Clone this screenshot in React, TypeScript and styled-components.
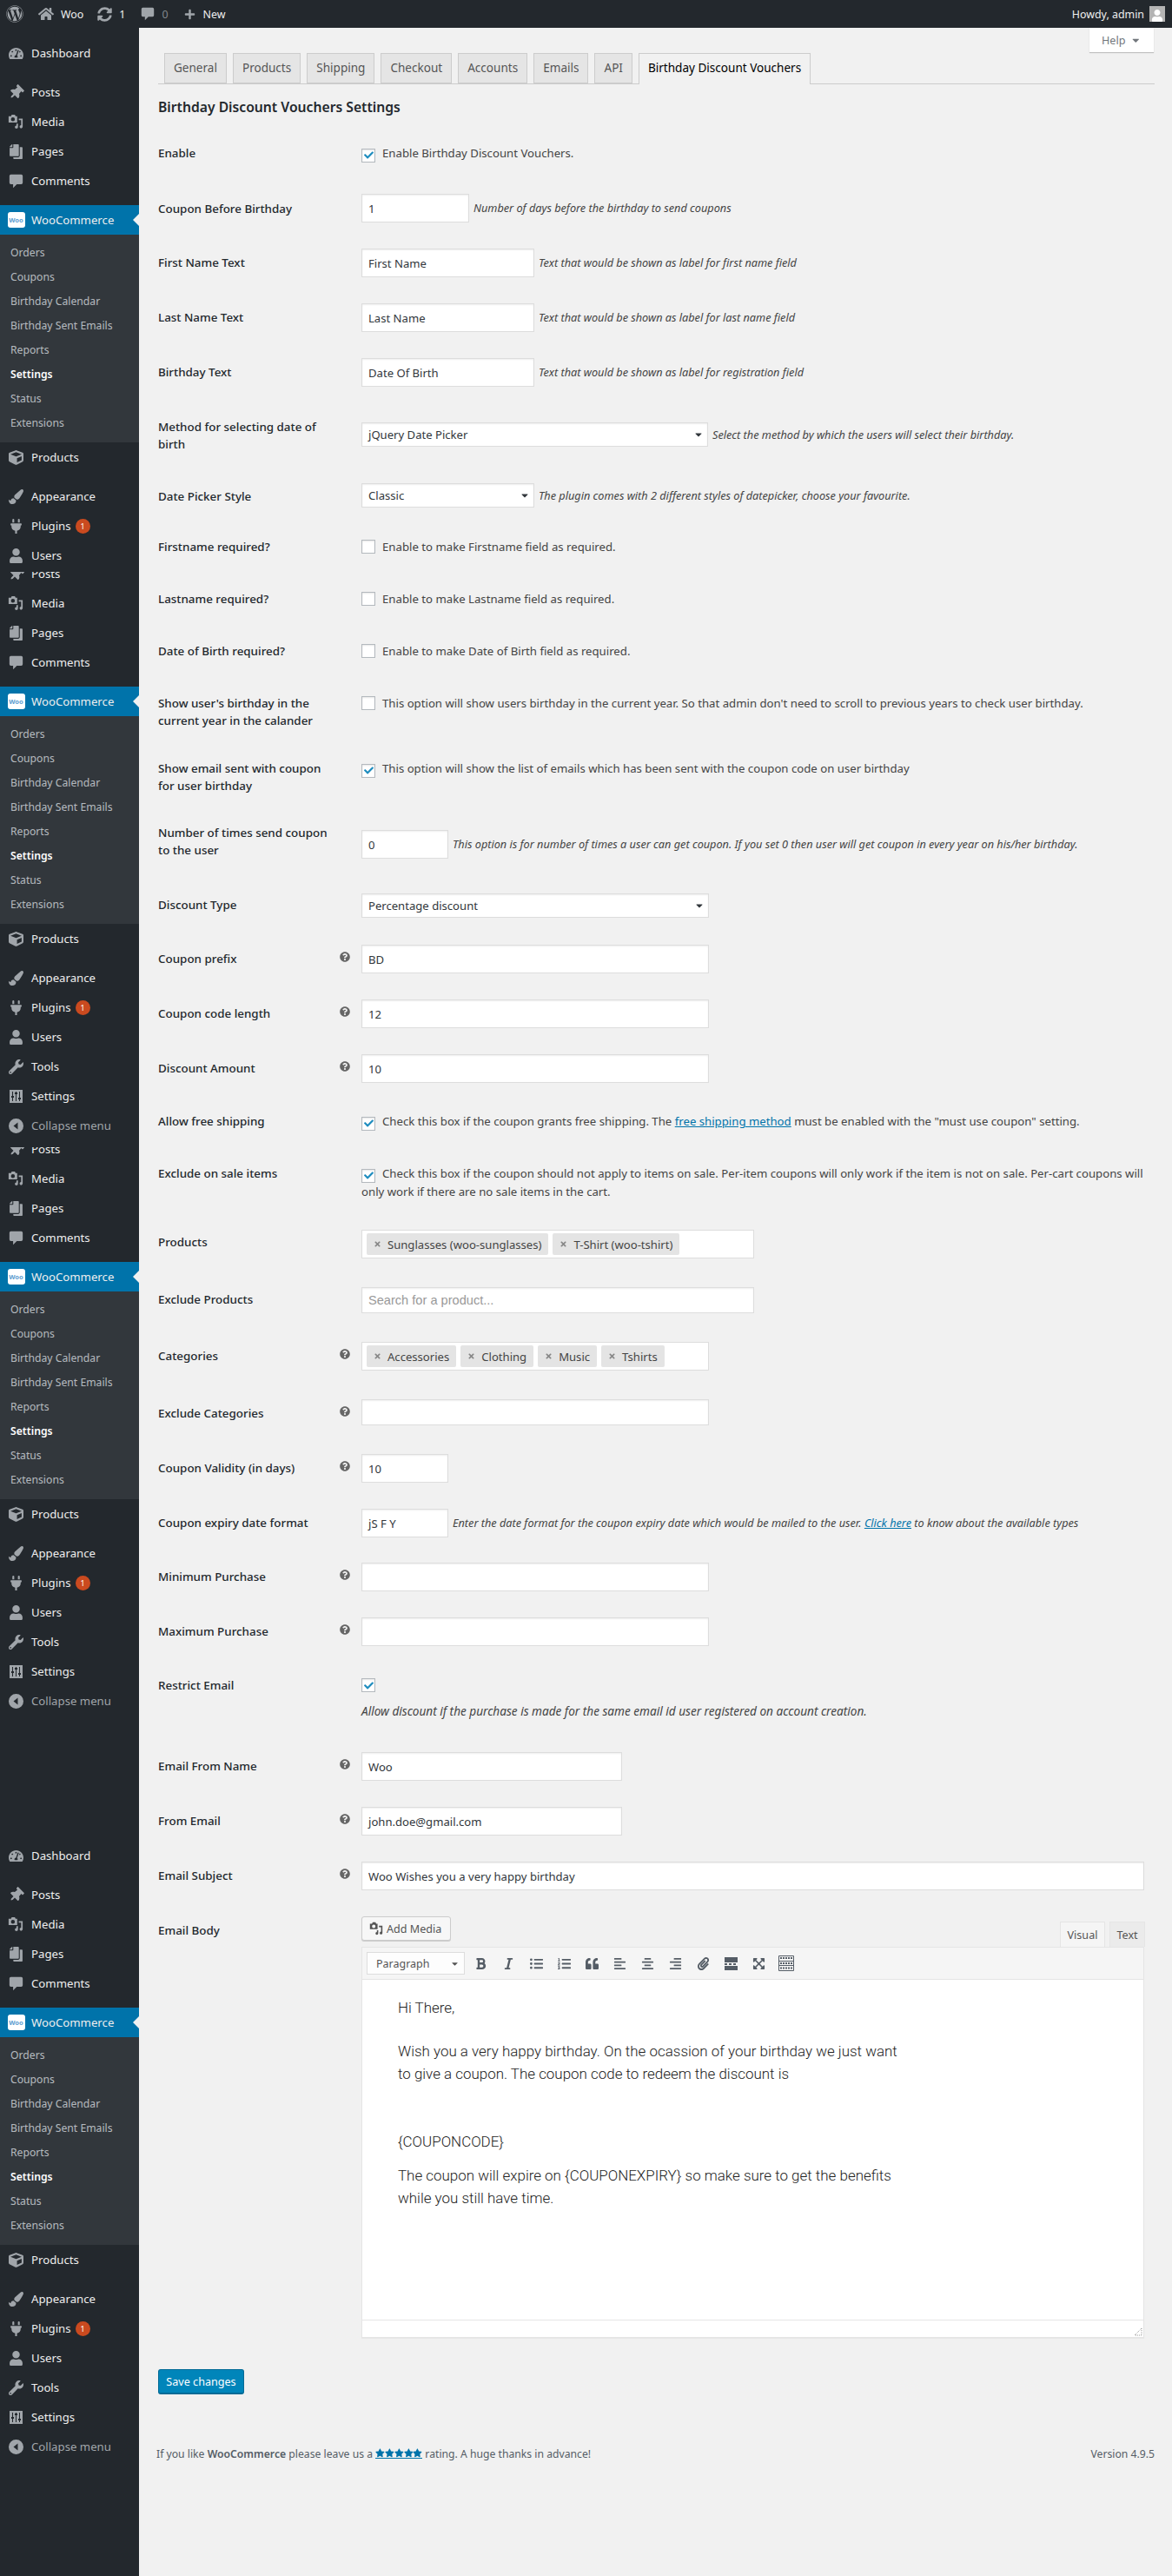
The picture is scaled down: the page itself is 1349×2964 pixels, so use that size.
import React from "react";
import styled, { createGlobalStyle } from "styled-components";
import {
  FaWordpress, FaHome, FaSyncAlt, FaPlus, FaTachometerAlt, FaThumbtack, FaCopy, FaCube,
  FaPaintBrush, FaPlug, FaUser, FaWrench, FaQuestionCircle, FaBold, FaItalic, FaListUl,
  FaListOl, FaQuoteLeft, FaAlignLeft, FaAlignCenter, FaAlignRight, FaPaperclip, FaExpandArrowsAlt,
  FaCaretDown, FaCheck, FaTimes, FaStar,
} from "react-icons/fa";

const Global = createGlobalStyle`
  html, body { margin: 0; padding: 0; background: #f1f1f1; }
  body { font-family: "Noto Sans", "Open Sans", sans-serif; font-size: 13px; color: #444; }
  * { box-sizing: border-box; }
`;

const Page = styled.div`
  width: 1349px;
  min-height: 2964px;
  background: #f1f1f1;
`;

const AdminBar = styled.header`
  display: flex;
  align-items: center;
  height: 32px;
  background: #23282d;
  color: #eee;
  font-size: 12.4px;
  padding: 0 8px 0 7px;
`;

const BarItem = styled.span<{ $left?: number; $dim?: boolean }>`
  display: inline-flex;
  align-items: center;
  gap: 8px;
  margin-left: ${(p) => p.$left ?? 0}px;
  color: ${(p) => (p.$dim ? "#82878c" : "#eee")};
  svg { color: #a0a5aa; }
`;

const Howdy = styled.span`
  margin-left: auto;
  display: inline-flex;
  align-items: center;
  gap: 6px;
`;

const Avatar = styled.span`
  display: inline-flex;
  align-items: flex-end;
  justify-content: center;
  width: 18px;
  height: 18px;
  background: #b4b4b4;
  color: #fff;
  overflow: hidden;
`;

const Body = styled.div`
  display: flex;
  align-items: stretch;
`;

const Sidebar = styled.aside`
  width: 160px;
  flex: none;
  background: #23282d;
  min-height: 2932px;
`;

/* the screenshot is stitched: the menu is repeated, each time cut at another height */
const Slice = styled.div<{ $height: number; $gap?: number }>`
  height: ${(p) => p.$height}px;
  margin-top: ${(p) => p.$gap ?? 0}px;
  overflow: hidden;
`;

const SliceInner = styled.div<{ $skip: number }>`
  margin-top: ${(p) => -p.$skip}px;
  padding-top: 12px;
`;

const MenuItem = styled.div<{ $current?: boolean; $gapBelow?: boolean; $dim?: boolean }>`
  position: relative;
  display: flex;
  align-items: center;
  height: 34px;
  margin-bottom: ${(p) => (p.$gapBelow ? 11 : 0)}px;
  background: ${(p) => (p.$current ? "#0073aa" : "transparent")};
  color: ${(p) => (p.$dim ? "#a0a5aa" : "#eee")};
  font-size: 13.2px;
  ${(p) =>
    p.$current
      ? `&:after { content: ""; position: absolute; right: 0; top: 10px; border: 7px solid transparent; border-right-color: #f1f1f1; border-left: 0; }`
      : ""}
`;

const MenuIcon = styled.span`
  display: inline-flex;
  align-items: center;
  justify-content: center;
  width: 36px;
  flex: none;
  color: #a0a5aa;
  font-size: 17px;
`;

const WooBadge = styled.span`
  display: inline-flex;
  align-items: center;
  justify-content: center;
  width: 20px;
  height: 18px;
  margin-left: 1px;
  border-radius: 3px;
  background: #fff;
  color: #5c9dd0;
  font-size: 7.5px;
  font-weight: 700;
`;

const PluginCount = styled.span`
  display: inline-flex;
  align-items: center;
  justify-content: center;
  width: 17px;
  height: 17px;
  margin-left: 5px;
  border-radius: 50%;
  background: #ca4a1f;
  color: #fff;
  font-size: 9px;
`;

const SubMenu = styled.div`
  background: #32373c;
  padding: 7px 0 8px;
`;

const SubItem = styled.div<{ $active?: boolean }>`
  height: 28px;
  line-height: 28px;
  padding-left: 12px;
  font-size: 12.2px;
  color: ${(p) => (p.$active ? "#fff" : "rgba(240,245,250,0.7)")};
  font-weight: ${(p) => (p.$active ? 600 : 400)};
`;

const Main = styled.main`
  flex: 1;
  min-width: 0;
  padding: 0 20px 0 22px;
`;

const HelpRow = styled.div`
  display: flex;
  justify-content: flex-end;
  height: 29px;
  padding-right: 1px;
`;

const HelpTab = styled.div`
  display: flex;
  align-items: center;
  justify-content: center;
  gap: 6px;
  width: 74px;
  height: 28px;
  background: #fff;
  color: #72777c;
  font-size: 12.6px;
  box-shadow: 0 1px 1px rgba(0, 0, 0, 0.2);
`;

const Tabs = styled.nav`
  display: flex;
  gap: 7px;
  height: 36px;
  padding-left: 7px;
  border-bottom: 1px solid #ccc;
`;

const Tab = styled.span<{ $active?: boolean }>`
  height: ${(p) => (p.$active ? 36 : 35)}px;
  padding: 0 10px;
  line-height: 33px;
  font-size: 13.55px;
  border: 1px solid #ccc;
  border-bottom: ${(p) => (p.$active ? "0" : "1px solid #ccc")};
  background: ${(p) => (p.$active ? "#f1f1f1" : "#e5e5e5")};
  color: ${(p) => (p.$active ? "#000" : "#555")};
`;

const Heading = styled.h2`
  margin: 0;
  height: 49px;
  padding-top: 13px;
  font-size: 15.7px;
  line-height: 26px;
  font-weight: 600;
  color: #23282d;
`;

const Row = styled.div<{ $height: number }>`
  display: grid;
  grid-template-columns: 234px 1fr;
  height: ${(p) => p.$height}px;
`;

const LabelCell = styled.div`
  position: relative;
  padding: 20px 32px 0 0;
  font-size: 13.4px;
  font-weight: 500;
  line-height: 20px;
  color: #23282d;
`;

const Tip = styled.span`
  position: absolute;
  top: 22px;
  right: 13px;
  font-size: 12px;
  line-height: 12px;
  color: #666;
`;

const FieldCell = styled.div<{ $pad?: number }>`
  display: flex;
  align-items: flex-start;
  padding-top: ${(p) => p.$pad ?? 14}px;
`;

const TextInput = styled.div<{ $width: number; $height?: number }>`
  display: flex;
  align-items: center;
  flex: none;
  width: ${(p) => p.$width}px;
  height: ${(p) => p.$height ?? 33}px;
  padding: 0 7px;
  background: #fff;
  border: 1px solid #ddd;
  box-shadow: inset 0 1px 2px rgba(0, 0, 0, 0.07);
  font-size: 13.1px;
  color: #32373c;
`;

const Placeholder = styled.span`
  font-family: "Liberation Sans", sans-serif;
  font-size: 14.6px;
  color: #999;
`;

const SelectBox = styled(TextInput)`
  justify-content: space-between;
  height: 28px;
  padding: 0 4px 0 7px;
  svg { color: #32373c; font-size: 12px; }
`;

const Hint = styled.span`
  margin-left: 5px;
  line-height: 33px;
  font-size: 12.7px;
  font-style: italic;
  color: #444;
  white-space: nowrap;
  a { color: #0073aa; }
`;

const SelectHint = styled(Hint)`
  line-height: 28px;
`;

const Check = styled.span`
  display: inline-flex;
  align-items: center;
  justify-content: center;
  vertical-align: -3px;
  flex: none;
  width: 16px;
  height: 16px;
  margin-right: 8px;
  background: #fff;
  border: 1px solid #b4b9be;
  box-shadow: inset 0 1px 2px rgba(0, 0, 0, 0.1);
  color: #1e8cbe;
  font-size: 11px;
`;

const CheckLine = styled.div`
  width: 901px;
  font-size: 13.2px;
  line-height: 20px;
  color: #444;
  a { color: #0073aa; }
`;

const Stack = styled.div`
  display: flex;
  flex-direction: column;
`;

const BelowHint = styled.span`
  margin-top: 12px;
  font-size: 13.6px;
  font-style: italic;
  color: #444;
`;

const ChipBox = styled.div<{ $width: number }>`
  display: flex;
  gap: 5px;
  width: ${(p) => p.$width}px;
  height: 33px;
  padding: 3px 5px;
  background: #fff;
  border: 1px solid #ddd;
`;

const Chip = styled.span`
  display: inline-flex;
  align-items: center;
  gap: 7px;
  height: 25px;
  padding: 0 8px;
  background: #e4e4e4;
  border-radius: 2px;
  font-size: 13.1px;
  color: #444;
  svg { font-size: 9px; color: #888; }
`;

const Editor = styled.div`
  width: 901px;
`;

const EditorTop = styled.div`
  display: flex;
  justify-content: space-between;
  align-items: flex-end;
  height: 35px;
`;

const AddMedia = styled.span`
  display: inline-flex;
  align-items: center;
  gap: 4px;
  align-self: flex-start;
  width: 103px;
  height: 28px;
  padding-left: 8px;
  background: #f7f7f7;
  border: 1px solid #ccc;
  border-radius: 3px;
  box-shadow: 0 1px 0 #ccc;
  color: #555;
  font-size: 12.6px;
`;

const ModeTabs = styled.div`
  display: flex;
  gap: 5px;
  margin-right: -1px;
`;

const ModeTab = styled.span<{ $active?: boolean }>`
  display: flex;
  align-items: center;
  justify-content: center;
  width: ${(p) => (p.$active ? 52 : 41)}px;
  height: 29px;
  background: ${(p) => (p.$active ? "#f5f5f5" : "#ebebeb")};
  border: 1px solid #e5e5e5;
  border-bottom: 0;
  font-size: 12.6px;
  color: #555;
`;

const Toolbar = styled.div`
  display: flex;
  align-items: center;
  height: 38px;
  padding-left: 5px;
  background: #f5f5f5;
  border: 1px solid #e5e5e5;
`;

const FormatSelect = styled.span`
  display: flex;
  align-items: center;
  justify-content: space-between;
  width: 113px;
  height: 26px;
  padding: 0 5px 0 10px;
  margin-right: 2px;
  background: #fdfdfd;
  border: 1px solid #ddd;
  font-size: 12.5px;
  color: #555;
`;

const ToolButton = styled.span`
  display: inline-flex;
  align-items: center;
  justify-content: center;
  width: 32px;
  height: 26px;
  font-size: 15px;
  color: #555d66;
`;

const EditorBody = styled.div`
  height: 391px;
  padding: 19px 0 0 41px;
  background: #fff;
  border-left: 1px solid #e5e5e5;
  border-right: 1px solid #e5e5e5;
  font-family: "Roboto", sans-serif;
  font-weight: 300;
  font-size: 16.95px;
  line-height: 26px;
  color: #222;
`;

const EditorPara = styled.p<{ $after: number }>`
  margin: 0 0 ${(p) => p.$after}px;
`;

const StatusBar = styled.div`
  position: relative;
  height: 21px;
  background: #fff;
  border: 1px solid #e5e5e5;
  box-shadow: 0 1px 1px rgba(0, 0, 0, 0.04);
`;

const Grip = styled.svg`
  position: absolute;
  right: 1px;
  bottom: 1px;
`;

const SaveButton = styled.button`
  display: block;
  width: 99px;
  height: 29px;
  margin-top: 36px;
  padding: 0;
  background: #0085ba;
  border: 1px solid #006a95;
  border-bottom-width: 2px;
  border-radius: 3px;
  color: #fff;
  font-family: inherit;
  font-size: 12.6px;
`;

const Footer = styled.footer`
  display: flex;
  justify-content: space-between;
  margin: 59px 0 0 -2px;
  font-size: 12.2px;
  line-height: 20px;
  color: #555d66;
  b { font-weight: 600; }
`;

const Stars = styled.a`
  display: inline-flex;
  color: #0073aa;
  border-bottom: 1px solid #0073aa;
  font-size: 10.8px;
`;

const MediaIcon = ({ size = 18 }: { size?: number }) => (
  <svg width={size} height={size} viewBox="0 0 20 20" fill="currentColor">
    <path d="M1 3h3l1-2h4l1 2h2v8H1zm5.500 1.500a2.500 2.500 0 1 0 0 5 2.500 2.500 0 0 0 0-5zM19 6v10.500a2 2 0 1 1-2-2V8h-3V6zM11 12.500h2V17a2 2 0 1 1-2-2z" fillRule="evenodd" />
  </svg>
);

const CommentIcon = ({ size = 17 }: { size?: number }) => (
  <svg width={size} height={size} viewBox="0 0 20 20" fill="currentColor">
    <path d="M3 1h14a2 2 0 0 1 2 2v9a2 2 0 0 1-2 2h-6l-5 5v-5H3a2 2 0 0 1-2-2V3a2 2 0 0 1 2-2z" />
  </svg>
);

const SettingsIcon = () => (
  <svg width="17" height="17" viewBox="0 0 17 17" fill="currentColor">
    <path fillRule="evenodd" d="M1 1h15v15H1zM4 3v5H3v2h1v4h1v-4h1V8H5V3zM8 3v1H7v2h1v8h1V6h1V4H9V3zM12 3v7h-1v2h1v2h1v-2h1v-2h-1V3z" />
  </svg>
);

const CollapseIcon = () => (
  <svg width="17" height="17" viewBox="0 0 17 17" fill="currentColor">
    <path fillRule="evenodd" d="M8.500 0a8.500 8.500 0 1 1 0 17 8.500 8.500 0 0 1 0-17zM10.500 4.500 5.500 8.500l5 4z" />
  </svg>
);

const subItems = ["Orders", "Coupons", "Birthday Calendar", "Birthday Sent Emails", "Reports", "Settings", "Status", "Extensions"];

const Menu = () => (
  <>
    <MenuItem $gapBelow><MenuIcon><FaTachometerAlt /></MenuIcon>Dashboard</MenuItem>
    <MenuItem><MenuIcon><FaThumbtack style={{ transform: "rotate(45deg)" }} /></MenuIcon>Posts</MenuItem>
    <MenuItem><MenuIcon><MediaIcon /></MenuIcon>Media</MenuItem>
    <MenuItem><MenuIcon><FaCopy style={{ transform: "scaleX(-1)" }} /></MenuIcon>Pages</MenuItem>
    <MenuItem $gapBelow><MenuIcon><CommentIcon /></MenuIcon>Comments</MenuItem>
    <MenuItem $current><MenuIcon><WooBadge>Woo</WooBadge></MenuIcon>WooCommerce</MenuItem>
    <SubMenu>
      {subItems.map((s) => <SubItem key={s} $active={s === "Settings"}>{s}</SubItem>)}
    </SubMenu>
    <MenuItem $gapBelow><MenuIcon><FaCube /></MenuIcon>Products</MenuItem>
    <MenuItem><MenuIcon><FaPaintBrush /></MenuIcon>Appearance</MenuItem>
    <MenuItem><MenuIcon><FaPlug /></MenuIcon>Plugins<PluginCount>1</PluginCount></MenuItem>
    <MenuItem><MenuIcon><FaUser /></MenuIcon>Users</MenuItem>
    <MenuItem><MenuIcon><FaWrench /></MenuIcon>Tools</MenuItem>
    <MenuItem><MenuIcon><SettingsIcon /></MenuIcon>Settings</MenuItem>
    <MenuItem $dim><MenuIcon><CollapseIcon /></MenuIcon>Collapse menu</MenuItem>
  </>
);

const MenuSlice = ({ skip, height, gap }: { skip: number; height: number; gap?: number }) => (
  <Slice $height={height} $gap={gap}>
    <SliceInner $skip={skip}><Menu /></SliceInner>
  </Slice>
);

const Field = ({ label, tip, height, pad, children }: { label: string; tip?: boolean; height: number; pad?: number; children?: React.ReactNode }) => (
  <Row $height={height}>
    <LabelCell>
      {label}
      {tip && <Tip><FaQuestionCircle /></Tip>}
    </LabelCell>
    <FieldCell $pad={pad}>{children}</FieldCell>
  </Row>
);

const CheckRow = ({ label, height, checked, children }: { label: string; height: number; checked?: boolean; children: React.ReactNode }) => (
  <Field label={label} height={height} pad={20}>
    <CheckLine>
      <Check>{checked && <FaCheck />}</Check>
      {children}
    </CheckLine>
  </Field>
);

const Chips = ({ width, items }: { width: number; items: string[] }) => (
  <ChipBox $width={width}>
    {items.map((c) => <Chip key={c}><FaTimes />{c}</Chip>)}
  </ChipBox>
);

const Select = ({ width, value }: { width: number; value: string }) => (
  <SelectBox $width={width}>{value}<FaCaretDown /></SelectBox>
);

const toolIcons = [FaBold, FaItalic, FaListUl, FaListOl, FaQuoteLeft, FaAlignLeft, FaAlignCenter, FaAlignRight, FaPaperclip];

export default function App() {
  return (
    <Page>
      <Global />
      <AdminBar>
        <BarItem><FaWordpress size={20} /></BarItem>
        <BarItem $left={17}><FaHome size={18} />Woo</BarItem>
        <BarItem $left={16}><FaSyncAlt size={17} />1</BarItem>
        <BarItem $left={18} $dim><CommentIcon size={16} />0</BarItem>
        <BarItem $left={19}><FaPlus size={13} />New</BarItem>
        <Howdy>
          Howdy, admin
          <Avatar><FaUser size={14} /></Avatar>
        </Howdy>
      </AdminBar>
      <Body>
        <Sidebar>
          <MenuSlice skip={0} height={626} />
          <MenuSlice skip={72} height={662} />
          <MenuSlice skip={72} height={654} />
          <MenuSlice skip={0} height={726} gap={132} />
        </Sidebar>
        <Main>
          <HelpRow><HelpTab>Help <FaCaretDown /></HelpTab></HelpRow>
          <Tabs>
            {["General", "Products", "Shipping", "Checkout", "Accounts", "Emails", "API"].map((t) => <Tab key={t}>{t}</Tab>)}
            <Tab $active>Birthday Discount Vouchers</Tab>
          </Tabs>
          <Heading>Birthday Discount Vouchers Settings</Heading>

          <CheckRow label="Enable" height={64} checked>Enable Birthday Discount Vouchers.</CheckRow>
          <Field label="Coupon Before Birthday" height={62} pad={13}>
            <TextInput $width={124}>1</TextInput>
            <Hint>Number of days before the birthday to send coupons</Hint>
          </Field>
          <Field label="First Name Text" height={63}>
            <TextInput $width={199}>First Name</TextInput>
            <Hint>Text that would be shown as label for first name field</Hint>
          </Field>
          <Field label="Last Name Text" height={63}>
            <TextInput $width={199}>Last Name</TextInput>
            <Hint>Text that would be shown as label for last name field</Hint>
          </Field>
          <Field label="Birthday Text" height={63}>
            <TextInput $width={199}>Date Of Birth</TextInput>
            <Hint>Text that would be shown as label for registration field</Hint>
          </Field>
          <Field label="Method for selecting date of birth" height={80} pad={25}>
            <Select width={399} value="jQuery Date Picker" />
            <SelectHint>Select the method by which the users will select their birthday.</SelectHint>
          </Field>
          <Field label="Date Picker Style" height={58} pad={15}>
            <Select width={199} value="Classic" />
            <SelectHint>The plugin comes with 2 different styles of datepicker, choose your favourite.</SelectHint>
          </Field>
          <CheckRow label="Firstname required?" height={60}>Enable to make Firstname field as required.</CheckRow>
          <CheckRow label="Lastname required?" height={60}>Enable to make Lastname field as required.</CheckRow>
          <CheckRow label="Date of Birth required?" height={60}>Enable to make Date of Birth field as required.</CheckRow>
          <CheckRow label="Show user's birthday in the current year in the calander" height={75}>
            This option will show users birthday in the current year. So that admin don't need to scroll to previous years to check user birthday.
          </CheckRow>
          <CheckRow label="Show email sent with coupon for user birthday" height={74} checked>
            This option will show the list of emails which has been sent with the coupon code on user birthday
          </CheckRow>
          <Field label="Number of times send coupon to the user" height={83} pad={27}>
            <TextInput $width={100}>0</TextInput>
            <Hint>This option is for number of times a user can get coupon. If you set 0 then user will get coupon in every year on his/her birthday.</Hint>
          </Field>
          <Field label="Discount Type" height={62} pad={17}>
            <Select width={400} value="Percentage discount" />
          </Field>
          <Field label="Coupon prefix" tip height={63}><TextInput $width={400}>BD</TextInput></Field>
          <Field label="Coupon code length" tip height={63}><TextInput $width={400}>12</TextInput></Field>
          <Field label="Discount Amount" tip height={61}><TextInput $width={400}>10</TextInput></Field>
          <CheckRow label="Allow free shipping" height={60} checked>
            Check this box if the coupon grants free shipping. The <a href="#s">free shipping method</a> must be enabled with the "must use coupon" setting.
          </CheckRow>
          <CheckRow label="Exclude on sale items" height={79} checked>
            Check this box if the coupon should not apply to items on sale. Per-item coupons will only work if the item is not on sale. Per-cart coupons will only work if there are no sale items in the cart.
          </CheckRow>
          <Field label="Products" height={66} pad={16}><Chips width={452} items={["Sunglasses (woo-sunglasses)", "T-Shirt (woo-tshirt)"]} /></Field>
          <Field label="Exclude Products" height={65} pad={16}><TextInput $width={452} $height={30}><Placeholder>Search for a product...</Placeholder></TextInput></Field>
          <Field label="Categories" tip height={66}><Chips width={400} items={["Accessories", "Clothing", "Music", "Tshirts"]} /></Field>
          <Field label="Exclude Categories" tip height={63}><TextInput $width={400} $height={30} /></Field>
          <Field label="Coupon Validity (in days)" tip height={63}><TextInput $width={100}>10</TextInput></Field>
          <Field label="Coupon expiry date format" height={62}>
            <TextInput $width={100}>jS F Y</TextInput>
            <Hint>Enter the date format for the coupon expiry date which would be mailed to the user. <a href="#d">Click here</a> to know about the available types</Hint>
          </Field>
          <Field label="Minimum Purchase" tip height={63}><TextInput $width={400} /></Field>
          <Field label="Maximum Purchase" tip height={62}><TextInput $width={400} /></Field>
          <Field label="Restrict Email" height={93} pad={22}>
            <Stack>
              <Check><FaCheck /></Check>
              <BelowHint>Allow discount if the purchase is made for the same email id user registered on account creation.</BelowHint>
            </Stack>
          </Field>
          <Field label="Email From Name" tip height={63}><TextInput $width={300}>Woo</TextInput></Field>
          <Field label="From Email" tip height={63}><TextInput $width={300}>john.doe@gmail.com</TextInput></Field>
          <Field label="Email Subject" tip height={63}><TextInput $width={901}>Woo Wishes you a very happy birthday</TextInput></Field>
          <Field label="Email Body" height={499}>
            <Editor>
              <EditorTop>
                <AddMedia><MediaIcon size={16} />Add Media</AddMedia>
                <ModeTabs>
                  <ModeTab $active>Visual</ModeTab>
                  <ModeTab>Text</ModeTab>
                </ModeTabs>
              </EditorTop>
              <Toolbar>
                <FormatSelect>Paragraph<FaCaretDown size={11} /></FormatSelect>
                {toolIcons.map((Icon, i) => <ToolButton key={i}><Icon /></ToolButton>)}
                <ToolButton><svg width="17" height="15" viewBox="0 0 17 15" fill="currentColor"><path d="M1 0h15v6H1zM1 7h3v2H1zM6 7h3v2H6zM11 7h3v2h-3zM1 10h15v5H1z" /></svg></ToolButton>
                <ToolButton><FaExpandArrowsAlt /></ToolButton>
                <ToolButton><svg width="18" height="18" viewBox="0 0 18 18" fill="none" stroke="currentColor"><path d="M.5.5h17v17H.5zM.5 6.500h17M.5 11.500h17" /><path d="M2 3h14M2 9h14M2 14.500h14" strokeDasharray="2 1" strokeWidth="2" /></svg></ToolButton>
              </Toolbar>
              <EditorBody>
                <EditorPara $after={24}>Hi There,</EditorPara>
                <EditorPara $after={52}>Wish you a very happy birthday. On the ocassion of your birthday we just want<br />to give a coupon. The coupon code to redeem the discount is</EditorPara>
                <EditorPara $after={13}>{"{COUPONCODE}"}</EditorPara>
                <EditorPara $after={0}>The coupon will expire on {"{COUPONEXPIRY}"} so make sure to get the benefits<br />while you still have time.</EditorPara>
              </EditorBody>
              <StatusBar>
                <Grip width="10" height="10" viewBox="0 0 10 10"><path d="M9 1v8H1z" fill="none" stroke="#999" strokeDasharray="1 1" /></Grip>
              </StatusBar>
            </Editor>
          </Field>
          <SaveButton>Save changes</SaveButton>
          <Footer>
            <span>If you like <b>WooCommerce</b> please leave us a <Stars href="#r"><FaStar /><FaStar /><FaStar /><FaStar /><FaStar /></Stars> rating. A huge thanks in advance!</span>
            <span>Version 4.9.5</span>
          </Footer>
        </Main>
      </Body>
    </Page>
  );
}
